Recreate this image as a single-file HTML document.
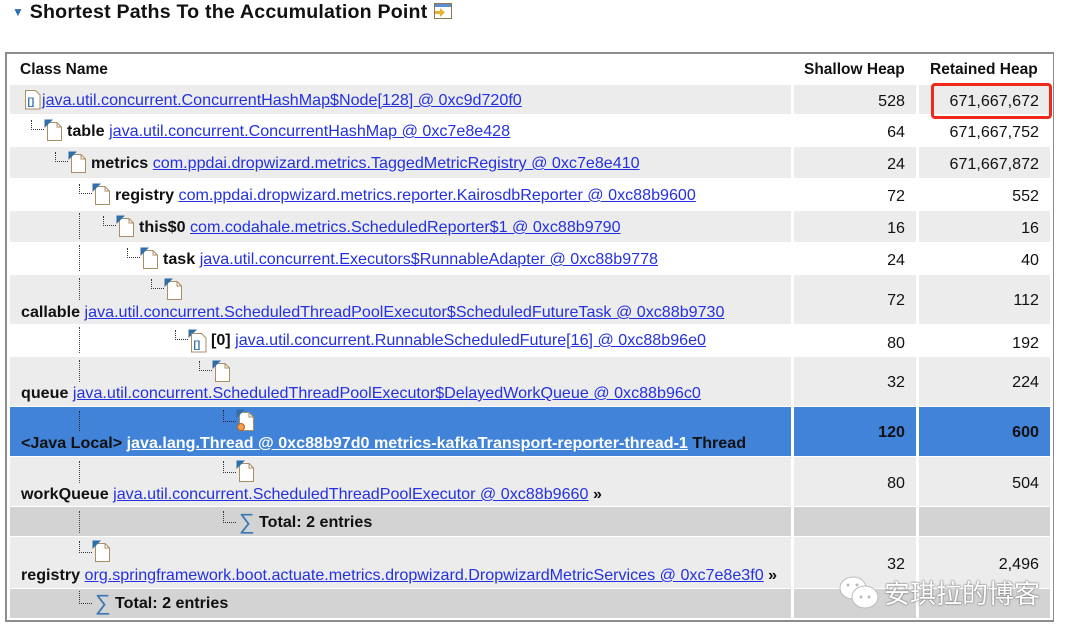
<!DOCTYPE html>
<html><head><meta charset="utf-8">
<style>
*{margin:0;padding:0;box-sizing:border-box}
body{width:1080px;height:642px;background:#fff;font-family:"Liberation Sans",sans-serif;font-size:16.1px;color:#111;position:relative;overflow:hidden}
.h{position:absolute;left:12px;top:0;font-weight:bold;font-size:19.6px;line-height:24px;letter-spacing:0.2px}
.tbl{position:absolute;left:5px;top:52px;width:1049px;height:570px;border:2px solid #8c8c8c;border-right-width:1px;border-bottom-width:2px;background:#fff}
.row{position:absolute;left:10px;width:1040px}
.c{position:absolute;top:0;bottom:0;background:#ececec}
.c1{left:0;width:781px}.c2{left:784px;width:122px}.c3{left:909px;width:131px}
.w .c{background:#fff}
.d .c{background:#d3d3d3}
.sel .c{background:#4283da;color:#fff}
.n{position:absolute;right:11px;text-align:right;line-height:20px}
.sel .n{font-weight:bold}
.t{position:absolute;white-space:nowrap;line-height:20px}
b{font-weight:bold}
a{color:#2431e0;text-decoration:underline}
.sel a{color:#fff}
.ic{position:absolute}
.cn{position:absolute;width:13px;height:10px;border-left:1px dotted #333;border-bottom:1px dotted #333}
.vl{position:absolute;width:0;border-left:1px dotted #444}
.sg{position:absolute;color:#3a78b5;font-size:22px;line-height:22px}
.hd{position:absolute;font-weight:bold;line-height:20px;font-size:15.5px}
</style></head><body>
<div class="h"><span style="color:#2e6fb3;font-size:12px;vertical-align:2px">&#9660;</span>&nbsp;Shortest Paths To the Accumulation Point
<svg width="20" height="18" style="vertical-align:-2px"><rect x="1.5" y="1.5" width="17" height="15" fill="#fff" stroke="#8a7a50"/><rect x="2" y="2" width="16" height="3" fill="#5b8ed0"/><path d="M2 9h5v-3l5 4.5-5 4.5v-3h-5z" fill="#e8b030"/></svg></div>

<div class="tbl"></div>
<svg width="0" height="0" style="position:absolute"><defs>
<g id="pg"><path d="M3.5 3.5h9.5l4.5 4.5v13.5h-14z" fill="#fff" stroke="#a88e62"/><path d="M13 3.5v4.5h4.5" fill="none" stroke="#a88e62"/><path d="M0.5 0.5h8.5l-8.5 8.5z" fill="#2f6ea8"/></g>
</defs></svg>

<div class="hd" style="left:20px;top:60px">Class Name</div>
<div class="hd" style="left:804px;top:60px">Shallow Heap</div>
<div class="hd" style="left:930px;top:60px">Retained Heap</div>

<div class="row" style="top:85px;height:29px"><div class="c c1"></div><div class="c c2"></div><div class="c c3"></div>
<svg class="ic" style="left:14px;top:4px" width="19" height="22"><path d="M1.5 1.5h10l4.5 4.5v14h-14.5z" fill="#fff" stroke="#a88e62"/><text x="3.5" y="16" font-size="10" fill="#2f6ea8" font-family="Liberation Sans" font-weight="bold">[]</text></svg>
<span class="t" style="left:32px;top:5px"><a>java.util.concurrent.ConcurrentHashMap$Node[128] @ 0xc9d720f0</a></span>
<span class="n" style="right:145px;top:6px">528</span><span class="n" style="top:6px">671,667,672</span></div>

<div class="row w" style="top:115px;height:31px"><div class="c c1"></div><div class="c c2"></div><div class="c c3"></div>
<span class="cn" style="left:21px;top:5px"></span><svg class="ic" style="left:34px;top:4px" width="19" height="23"><use href="#pg"/></svg>
<span class="t" style="left:57px;top:6px"><b>table</b> <a>java.util.concurrent.ConcurrentHashMap @ 0xc7e8e428</a></span>
<span class="n" style="right:145px;top:7px">64</span><span class="n" style="top:7px">671,667,752</span></div>

<div class="row" style="top:147px;height:31px"><div class="c c1"></div><div class="c c2"></div><div class="c c3"></div>
<span class="cn" style="left:45px;top:5px"></span><svg class="ic" style="left:58px;top:4px" width="19" height="23"><use href="#pg"/></svg>
<span class="t" style="left:81px;top:6px"><b>metrics</b> <a>com.ppdai.dropwizard.metrics.TaggedMetricRegistry @ 0xc7e8e410</a></span>
<span class="n" style="right:145px;top:7px">24</span><span class="n" style="top:7px">671,667,872</span></div>

<div class="row w" style="top:179px;height:31px"><div class="c c1"></div><div class="c c2"></div><div class="c c3"></div>
<span class="cn" style="left:69px;top:5px"></span><svg class="ic" style="left:82px;top:4px" width="19" height="23"><use href="#pg"/></svg>
<span class="t" style="left:105px;top:6px"><b>registry</b> <a>com.ppdai.dropwizard.metrics.reporter.KairosdbReporter @ 0xc88b9600</a></span>
<span class="n" style="right:145px;top:7px">72</span><span class="n" style="top:7px">552</span></div>

<div class="row" style="top:211px;height:31px"><div class="c c1"></div><div class="c c2"></div><div class="c c3"></div>
<span class="vl" style="left:69px;top:2px;height:26px"></span>
<span class="cn" style="left:93px;top:5px"></span><svg class="ic" style="left:106px;top:4px" width="19" height="23"><use href="#pg"/></svg>
<span class="t" style="left:129px;top:6px"><b>this$0</b> <a>com.codahale.metrics.ScheduledReporter$1 @ 0xc88b9790</a></span>
<span class="n" style="right:145px;top:7px">16</span><span class="n" style="top:7px">16</span></div>

<div class="row w" style="top:243px;height:31px"><div class="c c1"></div><div class="c c2"></div><div class="c c3"></div>
<span class="vl" style="left:69px;top:2px;height:26px"></span>
<span class="cn" style="left:117px;top:5px"></span><svg class="ic" style="left:130px;top:4px" width="19" height="23"><use href="#pg"/></svg>
<span class="t" style="left:153px;top:6px"><b>task</b> <a>java.util.concurrent.Executors$RunnableAdapter @ 0xc88b9778</a></span>
<span class="n" style="right:145px;top:7px">24</span><span class="n" style="top:7px">40</span></div>

<div class="row" style="top:275px;height:49px"><div class="c c1"></div><div class="c c2"></div><div class="c c3"></div>
<span class="vl" style="left:69px;top:3px;height:22px"></span>
<span class="cn" style="left:141px;top:4px"></span><svg class="ic" style="left:154px;top:3px" width="19" height="23"><use href="#pg"/></svg>
<span class="t" style="left:11px;top:27px"><b>callable</b> <a>java.util.concurrent.ScheduledThreadPoolExecutor$ScheduledFutureTask @ 0xc88b9730</a></span>
<span class="n" style="right:145px;top:15px">72</span><span class="n" style="top:15px">112</span></div>

<div class="row w" style="top:325px;height:31px"><div class="c c1"></div><div class="c c2"></div><div class="c c3"></div>
<span class="vl" style="left:69px;top:2px;height:26px"></span>
<span class="cn" style="left:165px;top:5px"></span><svg class="ic" style="left:178px;top:4px" width="21" height="24"><path d="M0.5 0.5h8.5l-8.5 8.5z" fill="#2f6ea8"/><path d="M3.5 4.5h10l4.5 4.5v14h-14.5z" fill="#fff" stroke="#a88e62"/><text x="5.5" y="19" font-size="10" fill="#2f6ea8" font-family="Liberation Sans" font-weight="bold">[]</text></svg>
<span class="t" style="left:201px;top:5px"><b>[0]</b> <a>java.util.concurrent.RunnableScheduledFuture[16] @ 0xc88b96e0</a></span>
<span class="n" style="right:145px;top:8px">80</span><span class="n" style="top:8px">192</span></div>

<div class="row" style="top:357px;height:49px"><div class="c c1"></div><div class="c c2"></div><div class="c c3"></div>
<span class="vl" style="left:69px;top:3px;height:22px"></span>
<span class="cn" style="left:189px;top:4px"></span><svg class="ic" style="left:202px;top:3px" width="19" height="23"><use href="#pg"/></svg>
<span class="t" style="left:11px;top:26px"><b>queue</b> <a>java.util.concurrent.ScheduledThreadPoolExecutor$DelayedWorkQueue @ 0xc88b96c0</a></span>
<span class="n" style="right:145px;top:15px">32</span><span class="n" style="top:15px">224</span></div>

<div class="row sel" style="top:407px;height:49px"><div class="c c1"></div><div class="c c2"></div><div class="c c3"></div>
<span class="vl" style="left:69px;top:4px;height:20px;border-color:#222"></span>
<span class="cn" style="left:213px;top:3px;height:12px;border-color:#222"></span><svg class="ic" style="left:226px;top:2px" width="22" height="26"><use href="#pg"/><circle cx="5" cy="18" r="3.5" fill="#f0a050" stroke="#c06020"/></svg>
<span class="t" style="left:11px;top:26px;font-weight:bold">&lt;Java Local&gt; <a>java.lang.Thread @ 0xc88b97d0 metrics-kafkaTransport-reporter-thread-1</a> Thread</span>
<span class="n" style="right:145px;top:15px">120</span><span class="n" style="top:15px">600</span></div>

<div class="row" style="top:457px;height:49px"><div class="c c1"></div><div class="c c2"></div><div class="c c3"></div>
<span class="vl" style="left:69px;top:4px;height:22px"></span>
<span class="cn" style="left:213px;top:4px;height:12px"></span><svg class="ic" style="left:226px;top:3px" width="19" height="23"><use href="#pg"/></svg>
<span class="t" style="left:11px;top:27px"><b>workQueue</b> <a>java.util.concurrent.ScheduledThreadPoolExecutor @ 0xc88b9660</a> <b>»</b></span>
<span class="n" style="right:145px;top:16px">80</span><span class="n" style="top:16px">504</span></div>

<div class="row d" style="top:507px;height:29px"><div class="c c1"></div><div class="c c2"></div><div class="c c3"></div>
<span class="vl" style="left:69px;top:4px;height:22px"></span>
<span class="cn" style="left:213px;top:4px;height:12px"></span><span class="sg" style="left:229px;top:4px">∑</span>
<span class="t" style="left:249px;top:5px"><b>Total: 2 entries</b></span></div>

<div class="row" style="top:537px;height:51px"><div class="c c1"></div><div class="c c2"></div><div class="c c3"></div>
<span class="cn" style="left:69px;top:4px;height:12px"></span><svg class="ic" style="left:82px;top:3px" width="19" height="23"><use href="#pg"/></svg>
<span class="t" style="left:11px;top:28px"><b>registry</b> <a>org.springframework.boot.actuate.metrics.dropwizard.DropwizardMetricServices @ 0xc7e8e3f0</a> <b>»</b></span>
<span class="n" style="right:145px;top:17px">32</span><span class="n" style="top:17px">2,496</span></div>

<div class="row d" style="top:589px;height:29px"><div class="c c1"></div><div class="c c2"></div><div class="c c3"></div>
<span class="cn" style="left:69px;top:2px;height:13px"></span><span class="sg" style="left:85px;top:3px">∑</span>
<span class="t" style="left:105px;top:4px"><b>Total: 2 entries</b></span></div>

<div style="position:absolute;left:931px;top:83px;width:121px;height:36px;border:3px solid #f02a1a;border-radius:4px"></div>

<svg style="position:absolute;left:837px;top:575px" width="46" height="38"><ellipse cx="16" cy="13" rx="13" ry="11" fill="#fff" stroke="#bbb"/><ellipse cx="28" cy="22" rx="13" ry="11" fill="#fff" stroke="#bbb"/><circle cx="11" cy="10" r="1.5" fill="#bbb"/><circle cx="20" cy="10" r="1.5" fill="#bbb"/><circle cx="24" cy="22" r="1.5" fill="#bbb"/><circle cx="32" cy="22" r="1.5" fill="#bbb"/></svg>
<div style="position:absolute;left:884px;top:577px;font-family:'Liberation Sans','Noto Sans CJK SC',sans-serif;font-size:26px;line-height:34px;color:#fff;text-shadow:0 0 2px #777,0 0 1px #555">安琪拉的博客</div>
</body></html>
